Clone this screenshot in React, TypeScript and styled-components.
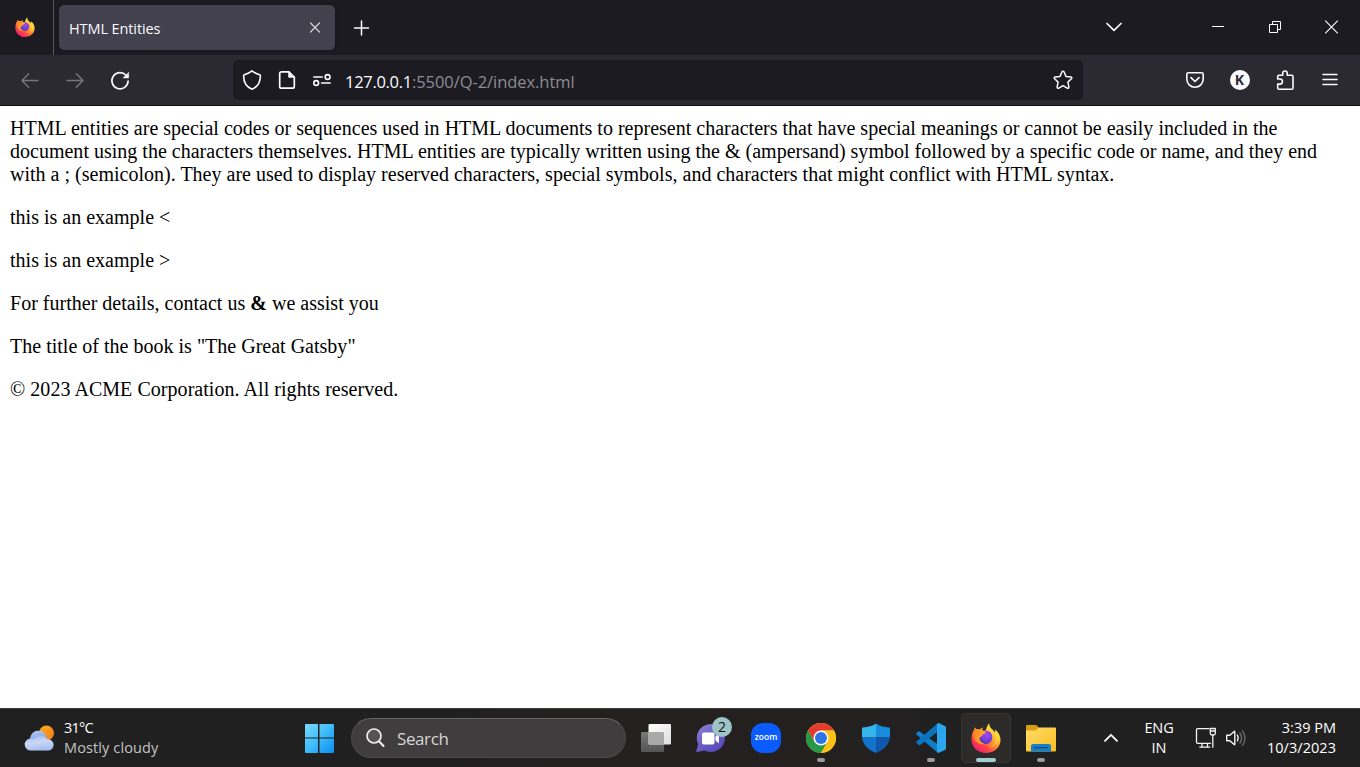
import React from "react";
import styled, { createGlobalStyle } from "styled-components";

const GlobalStyle = createGlobalStyle`
  * { box-sizing: border-box; }
  body { margin: 0; background: #fff; overflow: hidden; }
`;

const Screen = styled.div`
  width: 1360px;
  height: 767px;
  display: flex;
  flex-direction: column;
  font-family: "Open Sans", "Noto Sans", sans-serif;
  svg { display: block; flex: none; overflow: visible; }
`;

const TabStrip = styled.header`
  height: 55px;
  flex: none;
  display: flex;
  align-items: center;
  background: #1c1b22;
  color: #fbfbfe;
`;

const PinnedTab = styled.div`
  width: 54px;
  height: 55px;
  padding: 0 0 1px 15px;
  display: flex;
  align-items: center;
  border-right: 1px solid #57565e;
`;

const Tab = styled.div`
  width: 276px;
  height: 45px;
  margin-left: 5px;
  padding: 1px 14px 0 10px;
  display: flex;
  align-items: center;
  justify-content: space-between;
  border-radius: 5px;
  background: #42414d;
  box-shadow: 0 0 3px rgba(0, 0, 0, 0.35);
`;

const Label = styled.span<{ size: number; spacing?: number; color?: string }>`
  font-size: ${(p) => p.size}px;
  letter-spacing: ${(p) => p.spacing ?? 0}px;
  color: ${(p) => p.color ?? "#fbfbfe"};
  white-space: pre;
`;

const Slot = styled.div<{ w: number }>`
  width: ${(p) => p.w}px;
  flex: none;
  display: flex;
  align-items: center;
  justify-content: center;
`;

const WindowControls = styled.div`
  margin-left: auto;
  padding-bottom: 1px;
  display: flex;
  align-items: center;
`;

const NavBar = styled.nav`
  height: 51px;
  flex: none;
  display: flex;
  align-items: center;
  padding-left: 7px;
  background: #2b2a33;
  border-bottom: 1px solid #0c0c0d;
`;

const UrlBar = styled.div`
  width: 850px;
  height: 40px;
  margin-left: 91px;
  padding: 0 10px 0 1px;
  display: flex;
  align-items: center;
  border-radius: 5px;
  background: #1c1b22;
`;

const Url = styled.div`
  margin-left: 5px;
  padding-top: 2px;
  flex: 1;
  display: flex;
`;

const NavActions = styled.div`
  margin-left: auto;
  padding-right: 8px;
  display: flex;
  align-items: center;
`;

const Page = styled.main`
  flex: 1;
  padding: 11px 10px 0;
  background: #fff;
  color: #000;
  font: 20px/23px "Liberation Serif", "Times New Roman", serif;
  letter-spacing: 0.01px;
  p { margin: 0 0 20px; white-space: nowrap; }
`;

const Copyright = styled.p`
  letter-spacing: 0.045px;
`;

const Taskbar = styled.footer`
  height: 59px;
  flex: none;
  display: flex;
  align-items: center;
  background: linear-gradient(90deg, #202020 0%, #202020 30%, #242020 45%, #242020 60%, #202020 72%);
  border-top: 1px solid #3d3c3c;
`;

const Weather = styled.div`
  width: 291px;
  padding-left: 24px;
  display: flex;
  align-items: center;
  gap: 9px;
`;

const Stack = styled.div<{ align: string }>`
  display: flex;
  flex-direction: column;
  align-items: ${(p) => p.align};
  line-height: 20px;
`;

const SearchBox = styled.div`
  width: 275px;
  height: 40px;
  margin: 0 3px 0 5px;
  padding-left: 14px;
  display: flex;
  align-items: center;
  gap: 12px;
  border-radius: 20px;
  background: #3f3d3d;
  border: 1px solid #4b4949;
  border-top-color: #666464;
`;

const AppSlot = styled.div<{ active?: boolean }>`
  position: relative;
  width: 50px;
  height: 50px;
  margin: 0 3px 0 2px;
  flex: none;
  display: flex;
  align-items: center;
  justify-content: center;
  border-radius: 5px;
  border: 1px solid ${(p) => (p.active ? "#373434" : "transparent")};
  background: ${(p) => (p.active ? "#2d2a2a" : "transparent")};
`;

const Indicator = styled.i<{ active?: boolean }>`
  position: absolute;
  bottom: 0;
  left: 50%;
  width: ${(p) => (p.active ? 20 : 8)}px;
  height: 4px;
  transform: translateX(-50%);
  border-radius: 2px;
  background: ${(p) => (p.active ? "#a3cdcf" : "#9b9999")};
`;

const Badge = styled.span`
  position: absolute;
  top: 3px;
  right: 3px;
  width: 20px;
  height: 20px;
  border-radius: 50%;
  background: #9dc4c6;
  color: #111;
  font-size: 14px;
  line-height: 20px;
  text-align: center;
`;

const Tray = styled.div`
  margin-left: auto;
  padding-right: 24px;
  display: flex;
  align-items: center;
`;

const Clock = styled(Stack)`
  width: 94px;
`;

const line = {
  fill: "none",
  stroke: "#fbfbfe",
  strokeWidth: 1.6,
  strokeLinecap: "round" as const,
  strokeLinejoin: "round" as const,
};

function FirefoxLogo({ size, id }: { size: number; id: string }) {
  return (
    <svg width={size} height={size} viewBox="0 0 30 30">
      <defs>
        <linearGradient id={id + "a"} x1="0.85" y1="0.1" x2="0.2" y2="0.95">
          <stop offset="0" stopColor="#fff44f" />
          <stop offset="0.3" stopColor="#ffc236" />
          <stop offset="0.55" stopColor="#ff8030" />
          <stop offset="0.78" stopColor="#ff3b4b" />
          <stop offset="1" stopColor="#e81e78" />
        </linearGradient>
        <radialGradient id={id + "b"} cx="0.6" cy="0.3" r="0.8">
          <stop offset="0" stopColor="#a34bf0" />
          <stop offset="0.5" stopColor="#7a3fdb" />
          <stop offset="1" stopColor="#4a37a8" />
        </radialGradient>
        <linearGradient id={id + "c"} x1="0" y1="0" x2="1" y2="0.3">
          <stop offset="0" stopColor="#ff7a22" />
          <stop offset="1" stopColor="#ffb02e" />
        </linearGradient>
      </defs>
      <path
        fill={`url(#${id}a)`}
        d="M18.4.2c-.6 2.500.5 4.100 2.300 5.700 1.300 1.100 2.500 2.200 3.300 3.800.3-1 .2-2.100-.2-3.200 3.500 2.200 5.700 6.300 5.700 10.400C29.500 24.300 23 30 15 30S.5 24.100.5 16.400C.5 12.300 1.300 9 3.200 6.400c.1-.8.100-1.400.5-2.200.600.700 1.100 1.300 1.700 1.800 1.300-.2 2.500.1 3.500.5C9.800 5.400 11 4.700 12.300 4.500c-.8.900-1.200 2-1.100 3 1.400.1 2.600.300 3.600.1C15.300 4.800 16.500 2 18.400.2z"
      />
      <path fill={`url(#${id}b)`} d="M9 11c1.500-2 4.500-3.600 7.600-2.900 3.500.7 5.200 4 4.600 7.400-.6 3.400-3.300 5.500-6.600 5.500-3.700 0-6.300-2.600-6.300-5.700 0-1.700.1-3.200.7-4.300z" />
      <path fill={`url(#${id}c)`} d="M3.400 6.500c1.700-.7 4-.4 5.700.8 1.300.9 3.700.7 5.500 1.100.6 1.100-.5 2-1.800 2.700-1 .5-1.700.8-1.700 1.900-1.600.8-2.800 1.500-2.700 3 .2 2.400 2.200 4.300 5 4.600-4.800 1.500-9.600-1.700-10.800-6.300-.7-2.700-.2-5.700.8-7.800z" />
      <path fill="#ffd93f" fillOpacity="0.65" d="M18.400.2c-.6 2.500.5 4.100 2.300 5.700 3.500 3 5.100 6.500 4.200 11-1 4.500-4.500 6.800-8.300 7.100 7.500.8 11.500-4.600 10.700-10.100-.3-2.300-1.500-4.300-3.300-5.100-1.800-1.200-4.500-3-6.900-4.500.2-1.500.6-3 1.300-4.100z" />
    </svg>
  );
}

const BackIcon = () => (
  <svg width="20" height="20" viewBox="0 0 20 20" {...line} stroke="#77767d" strokeWidth={1.4}>
    <path d="M18 10.500H2M8.700 3.800L2 10.500l6.700 6.700" />
  </svg>
);
const ForwardIcon = () => (
  <svg width="20" height="20" viewBox="0 0 20 20" {...line} stroke="#77767d" strokeWidth={1.4}>
    <path d="M2 10.500h16M11.300 3.800L18 10.500l-6.700 6.700" />
  </svg>
);
const ReloadIcon = () => (
  <svg width="20" height="20" viewBox="0 0 20 20" {...line} strokeWidth={1.7}>
    <path d="M16 5.300A8.100 8.100 0 1 0 18.100 11" />
    <path d="M18.600 2.700v5.200h-5.200z" fill="#fbfbfe" strokeWidth={0.6} />
  </svg>
);
const ShieldIcon = () => (
  <svg width="20" height="20" viewBox="0 0 20 20" {...line} strokeWidth={1.6}>
    <path d="M10 .9C7.500 2.900 4.900 4 2.400 4.700c-.5.100-.8.500-.8 1C1.600 11.500 3.900 16.700 10 19.200c6.100-2.500 8.400-7.700 8.400-13.500 0-.5-.3-.9-.8-1C15.100 4 12.500 2.900 10 .9z" />
  </svg>
);
const PageIcon = () => (
  <svg width="20" height="20" viewBox="0 0 20 20" {...line} strokeWidth={1.7}>
    <path d="M11.800 1.800H4.500a1.800 1.800 0 0 0-1.800 1.800v12.800a1.800 1.800 0 0 0 1.800 1.800h11a1.800 1.800 0 0 0 1.800-1.800V7.300z" />
    <path d="M11.700 1.600v5.700h5.700z" fill="#fbfbfe" strokeWidth={0.8} />
  </svg>
);
const PermissionsIcon = () => (
  <svg width="20" height="20" viewBox="0 0 20 20" {...line} strokeWidth={1.6}>
    <path d="M1.800 7h8.400M18.200 13H9.600" />
    <circle cx="15.600" cy="7" r="2.400" />
    <circle cx="4.200" cy="13" r="2.400" />
  </svg>
);
const StarIcon = () => (
  <svg width="20" height="20" viewBox="0 0 20 20" {...line} strokeWidth={1.5}>
    <path d="M9 1.800c.4-.9 1.600-.9 2 0l2 4.600 4.800.5c1 .1 1.400 1.200.6 1.900l-3.500 3.300 1 4.800c.2 1-.8 1.700-1.700 1.200L10 15.700l-4.200 2.400c-.9.500-1.900-.2-1.700-1.200l1-4.800-3.500-3.300c-.8-.7-.4-1.800.6-1.900L7 6.400z" />
  </svg>
);
const PocketIcon = () => (
  <svg width="20" height="20" viewBox="0 0 20 20" {...line} strokeWidth={1.6}>
    <path d="M3.300 2.800h13.400c1 0 1.500.6 1.500 1.500v4.800c0 4.600-3.600 8.200-8.200 8.200s-8.200-3.600-8.200-8.200V4.300c0-.9.600-1.500 1.500-1.500z" />
    <path d="M6 7.700l4 3.800 4-3.800" strokeWidth={1.7} />
  </svg>
);
const PuzzleIcon = () => (
  <svg width="20" height="20" viewBox="0 0 20 20" {...line} strokeWidth={1.6}>
    <path d="M2.700 9V6.600c0-.8.500-1.300 1.300-1.300h3.700V3.200a2.200 2.200 0 0 1 4.500 0v2.100h4.500c.8 0 1.300.5 1.300 1.300v11.300c0 .8-.5 1.300-1.300 1.300H4c-.8 0-1.300-.5-1.300-1.300v-3.800h2.200a2.500 2.500 0 0 0 0-5.100z" />
  </svg>
);

const ProfileAvatar = styled.div`
  width: 20px;
  height: 20px;
  display: flex;
  align-items: center;
  justify-content: center;
  border-radius: 50%;
  background: #fbfbfe;
  color: #2b2a33;
  font: 700 14px/20px "Open Sans", sans-serif;
`;

const WeatherIcon = () => (
  <svg width="31" height="28" viewBox="0 0 31 28">
    <defs>
      <linearGradient id="sun" x1="0" y1="0" x2="1" y2="1">
        <stop offset="0" stopColor="#fbb51c" />
        <stop offset="1" stopColor="#f4771a" />
      </linearGradient>
      <linearGradient id="cloudBack" x1="0" y1="0" x2="0.5" y2="1">
        <stop offset="0" stopColor="#b9cdf6" />
        <stop offset="1" stopColor="#7e9fe6" />
      </linearGradient>
      <linearGradient id="cloudFront" x1="0" y1="0" x2="0.3" y2="1">
        <stop offset="0" stopColor="#9bb5ee" />
        <stop offset="0.5" stopColor="#cbd9f6" />
        <stop offset="1" stopColor="#a9c0ef" />
      </linearGradient>
    </defs>
    <circle cx="22.500" cy="9" r="7.500" fill="url(#sun)" />
    <path d="M6 15a8.400 8.400 0 0 1 16-3.500l2.500 6.500H6z" fill="url(#cloudBack)" />
    <path d="M7 26.500a6 6 0 0 1-.6-12 10 10 0 0 1 4.300.6 7.500 7.500 0 0 1 12.500.3 5.600 5.600 0 1 1 1.700 11.100z" fill="url(#cloudFront)" />
  </svg>
);

const StartIcon = () => (
  <svg width="30" height="30" viewBox="0 0 30 30">
    <defs>
      <linearGradient id="win" gradientUnits="userSpaceOnUse" x1="0" y1="0" x2="30" y2="30">
        <stop offset="0" stopColor="#7fdcfb" />
        <stop offset="0.5" stopColor="#3fbdf9" />
        <stop offset="1" stopColor="#0a8ef2" />
      </linearGradient>
    </defs>
    <path fill="url(#win)" d="M2 1h12v13.500H1V2a1 1 0 0 1 1-1zM15.500 1H29a1 1 0 0 1 1 1v12.500H15.500zM1 15.500h13V30H2a1 1 0 0 1-1-1zM15.500 15.500H30V29a1 1 0 0 1-1 1H15.500z" />
  </svg>
);

const SearchIcon = () => (
  <svg width="19" height="20" viewBox="0 0 19 20" fill="none" stroke="#eee" strokeLinecap="round">
    <circle cx="8" cy="8" r="7" strokeWidth="1.700" fill="#555353" />
    <path d="M13.200 13.400l4.300 4.500" strokeWidth="2.100" />
  </svg>
);

const TaskViewIcon = () => (
  <svg width="30" height="30" viewBox="0 0 30 30">
    <defs>
      <linearGradient id="tvf" x1="0" y1="0" x2="1" y2="1">
        <stop offset="0" stopColor="#fff" />
        <stop offset="1" stopColor="#dedede" />
      </linearGradient>
      <linearGradient id="tvb" x1="0" y1="0" x2="0" y2="1">
        <stop offset="0" stopColor="#777" />
        <stop offset="1" stopColor="#555" />
      </linearGradient>
    </defs>
    <rect x="0" y="9" width="23" height="20" rx="1" fill="url(#tvb)" />
    <rect x="7.500" y="1" width="22.500" height="20.500" rx="1" fill="url(#tvf)" />
    <path d="M7.500 9H22a1 1 0 0 1 1 1v11.500H8.500a1 1 0 0 1-1-1z" fill="#a9a9a9" />
  </svg>
);

const ChatIcon = () => (
  <svg width="30" height="30" viewBox="0 0 30 30">
    <defs>
      <linearGradient id="chat" x1="0" y1="0" x2="0.700" y2="1">
        <stop offset="0" stopColor="#8c83d6" />
        <stop offset="1" stopColor="#5646b8" />
      </linearGradient>
    </defs>
    <path fill="url(#chat)" d="M15 1a14 14 0 1 1-6.500 26.400L1.500 29a1 1 0 0 1-1.200-1.200l1.900-6.600A14 14 0 0 1 15 1z" />
    <rect x="6" y="9.500" width="12.500" height="12" rx="1.800" fill="#fff" />
    <path d="M19.500 13.500l3.400-3v10l-3.400-3z" fill="#fff" />
  </svg>
);

const ZoomTile = styled.div`
  width: 30px;
  height: 30px;
  border-radius: 12px;
  background: #0b5cff;
  color: #fff;
  font: 600 8.5px/28px "Open Sans", sans-serif;
  text-align: center;
`;

const ChromeIcon = () => (
  <svg width="30" height="30" viewBox="0 0 30 30">
    <circle cx="15" cy="15" r="15" fill="#fbc116" />
    <path d="M2 7.500A15 15 0 0 1 28 7.500H15L8.500 18.750z" fill="#e33b2e" />
    <path d="M2 7.500A15 15 0 0 0 15 30l6.500-11.250H8.500z" fill="#279847" />
    <path d="M28 7.500H15v7.500l6.500 3.750L15 30A15 15 0 0 0 28 7.500z" fill="#fbc116" />
    <circle cx="15" cy="15" r="7.500" fill="#fff" />
    <circle cx="15" cy="15" r="6" fill="#2f72e4" />
  </svg>
);

const DefenderIcon = () => (
  <svg width="30" height="30" viewBox="0 0 30 30">
    <defs>
      <clipPath id="shieldClip">
        <path d="M15 .500c3.500 2.500 8 3.700 13.200 3.900.5 0 .8.3.8.8V13c0 7.500-5 13.500-14 17C6 26.500 1 20.500 1 13V5.200c0-.5.300-.8.800-.8C7 4.200 11.500 3 15 .500z" />
      </clipPath>
    </defs>
    <g clipPath="url(#shieldClip)">
      <path d="M0 0h15v14.500H0z" fill="#36b5ec" />
      <path d="M15 0h15v14.500H15z" fill="#178bdc" />
      <path d="M0 14.500h15V30H0z" fill="#1273cc" />
      <path d="M15 14.500h15V30H15z" fill="#0d57ac" />
    </g>
  </svg>
);

const CodeIcon = () => (
  <svg width="30" height="30" viewBox="0 0 30 30">
    <path d="M2.800 8.100L.5 9.900c-.6.500-.6 1.100-.1 1.600L21.800 29.700 22 21.500z" fill="#0f7fcb" />
    <path d="M2.800 22L.5 20.100c-.6-.5-.6-1.100-.1-1.600L21.800.300 22 8.500 4.300 22.100c-.5.300-1 .300-1.500-.1z" fill="#0a73bd" />
    <path d="M21.800.200c.4-.2.800-.2 1.200 0l6 2.700c.6.300 1 .9 1 1.500v21.200c0 .6-.4 1.200-1 1.500l-6 2.700c-.4.200-.8.200-1.200 0-.5-.3-.8-.6-.8-1.300V1.500c0-.7.300-1 .8-1.300z" fill="#2aa5ee" />
  </svg>
);

const FolderIcon = () => (
  <svg width="30" height="30" viewBox="0 0 30 30">
    <defs>
      <linearGradient id="folder" x1="0" y1="0" x2="1" y2="1">
        <stop offset="0" stopColor="#ffdc68" />
        <stop offset="1" stopColor="#fbbd23" />
      </linearGradient>
    </defs>
    <path d="M1.200 2h9.300l3 3.500L11 9H0V3.200C0 2.500.5 2 1.200 2z" fill="#d99c10" />
    <path d="M0 7.500h9.500l3-3H29a1 1 0 0 1 1 1V27.500a1 1 0 0 1-1 1H1a1 1 0 0 1-1-1z" fill="url(#folder)" />
    <path d="M5 28.500v-5.300c0-1.300.9-2.200 2.200-2.200h15.600c1.300 0 2.200.9 2.200 2.200v5.300z" fill="#1580ca" />
    <path d="M8.500 24.600h13" stroke="#0a4a84" strokeWidth="1.200" strokeLinecap="round" />
  </svg>
);

const NetworkIcon = () => (
  <svg width="22" height="22" viewBox="0 0 22 22" {...line} stroke="#f3f3f3" strokeWidth={1.3}>
    <path d="M14 1.700H2.700c-.7 0-1.200.5-1.200 1.200v12.200c0 .7.500 1.200 1.200 1.200H15.500M7 16.500v3.300M12.500 16.500v3.300M4.800 20.200h10" />
    <path d="M15.300 1.500h5v4.800c0 1-.6 1.700-1.500 1.700h-2c-.9 0-1.500-.7-1.500-1.700zM15.300 4h5M17.800 8v12.200" />
  </svg>
);

const VolumeIcon = () => (
  <svg width="22" height="20" viewBox="0 0 22 20" {...line} stroke="#f3f3f3" strokeWidth={1.4}>
    <path d="M1.700 7.300v5.400h3.200l4.200 3.900c.3.300.7.100.7-.3V3.700c0-.4-.4-.6-.7-.3L4.900 7.300z" />
    <path d="M12.400 7.200c1 1.700 1 3.900 0 5.600" />
    <path d="M14.900 5c2 3 2 7 0 10M17.500 2.800c3.200 4.300 3.200 10.100 0 14.400" stroke="#6a6a6a" />
  </svg>
);

export default function App() {
  return (
    <Screen>
      <GlobalStyle />
      <TabStrip>
        <PinnedTab><FirefoxLogo size={20} id="pin" /></PinnedTab>
        <Tab>
          <Label size={14.5} spacing={-0.1}>HTML Entities</Label>
          <svg width="12" height="12" viewBox="0 0 12 12" {...line} stroke="#d5d5da" strokeWidth={1.2}>
            <path d="M1.500 1l9 9M10.500 1l-9 9" />
          </svg>
        </Tab>
        <Slot w={53}>
          <svg width="16" height="16" viewBox="0 0 16 16" {...line} strokeWidth={1.5}>
            <path d="M7.500 1v14M.500 8h14" />
          </svg>
        </Slot>
        <WindowControls>
          <Slot w={150}>
            <svg width="16" height="16" viewBox="0 0 16 16" {...line} strokeWidth={1.7}>
              <path d="M1 4.500l7 6.800 7-6.800" />
            </svg>
          </Slot>
          <Slot w={57}>
            <svg width="12" height="12" viewBox="0 0 12 12" {...line} strokeWidth={1} strokeLinecap="butt">
              <path d="M0 5.500h12" />
            </svg>
          </Slot>
          <Slot w={57}>
            <svg width="12" height="12" viewBox="0 0 12 12" fill="none" stroke="#fbfbfe">
              <path d="M.500 3.500h8v8h-8zM3.500 3.500v-3h8v8h-3" />
            </svg>
          </Slot>
          <Slot w={57}>
            <svg width="14" height="14" viewBox="0 0 14 14" {...line} strokeWidth={1.1} strokeLinecap="butt">
              <path d="M.200.700l12.600 12.600M12.800.700L.200 13.300" />
            </svg>
          </Slot>
        </WindowControls>
      </TabStrip>

      <NavBar>
        <Slot w={45}><BackIcon /></Slot>
        <Slot w={45}><ForwardIcon /></Slot>
        <Slot w={45}><ReloadIcon /></Slot>
        <UrlBar>
          <Slot w={35}><ShieldIcon /></Slot>
          <Slot w={35}><PageIcon /></Slot>
          <Slot w={36}><PermissionsIcon /></Slot>
          <Url>
            <Label size={16.5} spacing={-0.3}>127.0.0.1</Label>
            <Label size={16.5} spacing={-0.06} color="#8d8c93">:5500/Q-2/index.html</Label>
          </Url>
          <StarIcon />
        </UrlBar>
        <NavActions>
          <Slot w={45}><PocketIcon /></Slot>
          <Slot w={45}><ProfileAvatar>K</ProfileAvatar></Slot>
          <Slot w={45}><PuzzleIcon /></Slot>
          <Slot w={45}>
            <svg width="16" height="16" viewBox="0 0 16 16" {...line} strokeWidth={1.5}>
              <path d="M1 2.500h14M1 7.500h14M1 12.500h14" />
            </svg>
          </Slot>
        </NavActions>
      </NavBar>

      <Page>
        <p>
          HTML entities are special codes or sequences used in HTML documents to represent characters that have special meanings or cannot be easily included in the<br />
          document using the characters themselves. HTML entities are typically written using the &amp; (ampersand) symbol followed by a specific code or name, and they end<br />
          with a ; (semicolon). They are used to display reserved characters, special symbols, and characters that might conflict with HTML syntax.
        </p>
        <p>this is an example &lt;</p>
        <p>this is an example &gt;</p>
        <p>For further details, contact us <b>&amp;</b> we assist you</p>
        <p>The title of the book is "The Great Gatsby"</p>
        <Copyright>© 2023 ACME Corporation. All rights reserved.</Copyright>
      </Page>

      <Taskbar>
        <Weather>
          <WeatherIcon />
          <Stack align="flex-start">
            <Label size={14.5} spacing={-0.8} color="#fff">31°C</Label>
            <Label size={14.5} spacing={0.12} color="#c4c4c4">Mostly cloudy</Label>
          </Stack>
        </Weather>
        <Slot w={55}><StartIcon /></Slot>
        <SearchBox>
          <SearchIcon />
          <Label size={17} spacing={-0.4} color="#d6d6d6">Search</Label>
        </SearchBox>
        <AppSlot><TaskViewIcon /></AppSlot>
        <AppSlot><ChatIcon /><Badge>2</Badge></AppSlot>
        <AppSlot><ZoomTile>zoom</ZoomTile></AppSlot>
        <AppSlot><ChromeIcon /><Indicator /></AppSlot>
        <AppSlot><DefenderIcon /></AppSlot>
        <AppSlot><CodeIcon /><Indicator /></AppSlot>
        <AppSlot active><FirefoxLogo size={30} id="task" /><Indicator active /></AppSlot>
        <AppSlot><FolderIcon /><Indicator /></AppSlot>
        <Tray>
          <Slot w={50}>
            <svg width="16" height="12" viewBox="0 0 16 12" {...line} strokeWidth={1.8}>
              <path d="M2 8.800l6-6 6 6" />
            </svg>
          </Slot>
          <Slot w={46}>
            <Stack align="center">
              <Label size={14.5} spacing={-0.1} color="#fff">ENG</Label>
              <Label size={14.5} spacing={-0.1} color="#fff">IN</Label>
            </Stack>
          </Slot>
          <Slot w={48}><NetworkIcon /></Slot>
          <Slot w={12}><VolumeIcon /></Slot>
          <Clock align="flex-end">
            <Label size={14.5} spacing={0} color="#fff">3:39 PM</Label>
            <Label size={14.5} spacing={0.05} color="#fff">10/3/2023</Label>
          </Clock>
        </Tray>
      </Taskbar>
    </Screen>
  );
}
